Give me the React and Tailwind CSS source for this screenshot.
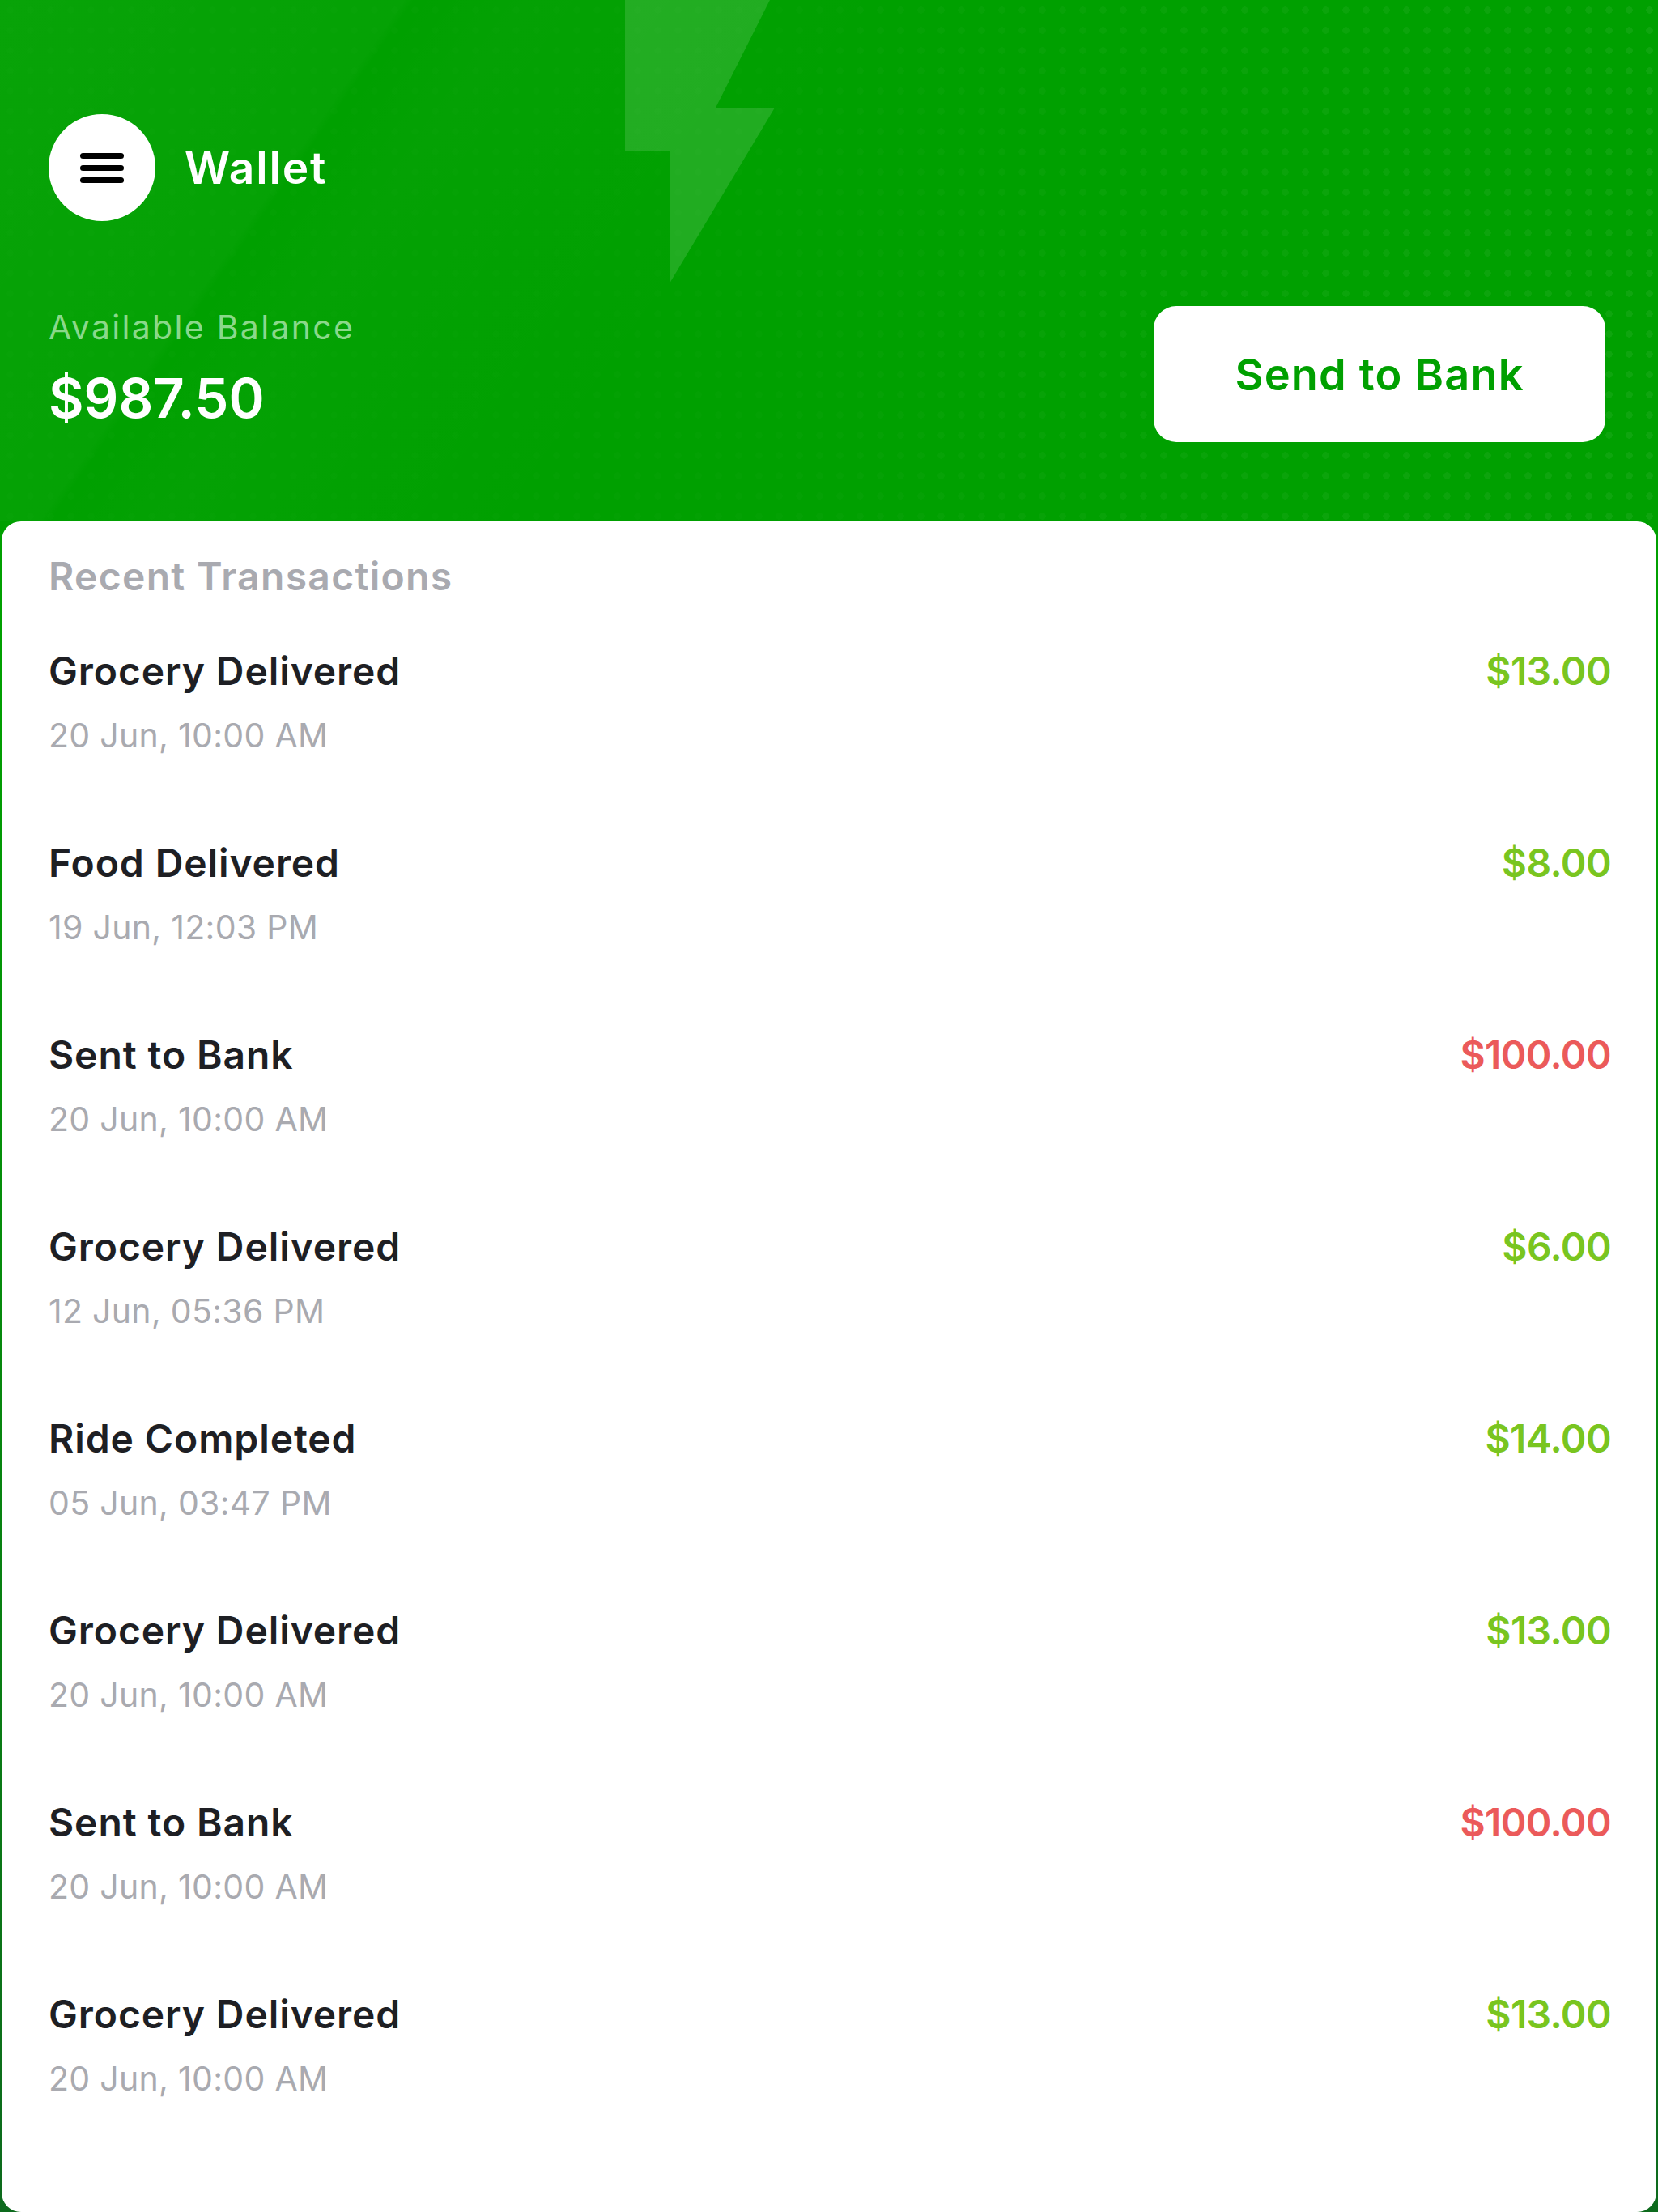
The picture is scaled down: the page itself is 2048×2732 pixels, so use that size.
import React from "react";

const transactions = [
  { title: "Grocery Delivered", date: "20 Jun, 10:00 AM", amount: "$13.00", type: "credit" },
  { title: "Food Delivered", date: "19 Jun, 12:03 PM", amount: "$8.00", type: "credit" },
  { title: "Sent to Bank", date: "20 Jun, 10:00 AM", amount: "$100.00", type: "debit" },
  { title: "Grocery Delivered", date: "12 Jun, 05:36 PM", amount: "$6.00", type: "credit" },
  { title: "Ride Completed", date: "05 Jun, 03:47 PM", amount: "$14.00", type: "credit" },
  { title: "Grocery Delivered", date: "20 Jun, 10:00 AM", amount: "$13.00", type: "credit" },
  { title: "Sent to Bank", date: "20 Jun, 10:00 AM", amount: "$100.00", type: "debit" },
  { title: "Grocery Delivered", date: "20 Jun, 10:00 AM", amount: "$13.00", type: "credit" },
];

function Bolt() {
  return (
    <svg className="absolute left-0 top-0" width="1000" height="360" viewBox="0 0 1000 360">
      <polygon points="772,0 951,0 884,133 957,133 827,350 827,186 772,186" fill="#ffffff" fillOpacity="0.13" />
    </svg>
  );
}

function MenuButton() {
  return (
    <button className="w-[132px] h-[132px] rounded-full bg-white flex flex-col items-center justify-center gap-[8px]">
      <span className="block w-[54px] h-[7px] rounded-full bg-black" />
      <span className="block w-[54px] h-[7px] rounded-full bg-black" />
      <span className="block w-[54px] h-[7px] rounded-full bg-black" />
    </button>
  );
}

export default function App() {
  return (
    <div
      className="w-[2048px] h-[2732px] flex flex-col bg-[linear-gradient(to_bottom,#00a000_0%,#00a000_30%,#0d6a1d_100%)]"
      style={{ fontFamily: "Inter, 'Noto Sans', sans-serif" }}
    >
      {/* header */}
      <div className="relative h-[644px] shrink-0 overflow-hidden bg-[#00a000]">
        <div className="absolute inset-0 bg-[linear-gradient(125deg,rgba(255,255,255,0.03)_0%,rgba(255,255,255,0.02)_20%,rgba(255,255,255,0)_20.5%,rgba(255,255,255,0.015)_26%,rgba(255,255,255,0)_45%)]" />
        <div className="absolute inset-0 bg-[radial-gradient(circle,rgba(255,255,255,0.06)_4px,transparent_4.5px)] bg-[size:25px_25px] [mask-image:linear-gradient(to_right,rgba(0,0,0,0.2)_0%,rgba(0,0,0,0.2)_45%,black_100%)]" />
        <Bolt />

        <div className="relative pt-[141px] pl-[60px] pr-[65px]">
          <div className="flex items-center gap-[36px]">
            <MenuButton />
            <h1 className="text-[55px] leading-[64px] font-semibold tracking-[1.8px] text-white">Wallet</h1>
          </div>

          <div className="mt-[105px] flex items-start justify-between">
            <div className="pt-[2px]">
              <p className="text-[41px] leading-[48px] tracking-[2.3px] text-[#8ad88a]">Available Balance</p>
              <p className="mt-[24px] text-[67px] leading-[80px] font-semibold text-white">$987.50</p>
            </div>
            <button className="w-[558px] h-[168px] rounded-[28px] bg-white text-[54px] font-semibold tracking-[1.2px] text-[#00a000]">
              Send to Bank
            </button>
          </div>
        </div>
      </div>

      {/* transactions card */}
      <div className="mx-[2px] flex-1 bg-white rounded-[24px] pl-[58px] pr-[56px] pt-[38px]">
        <h2 className="text-[48px] leading-[60px] font-semibold tracking-[1.3px] text-[#a9aab0]">Recent Transactions</h2>
        <div className="mt-[57px] flex flex-col gap-[100px]">
          {transactions.map((t, i) => (
            <div key={i} className="flex items-start justify-between">
              <div>
                <p className="text-[48px] leading-[60px] font-semibold tracking-[0.9px] text-[#1e1f24]">{t.title}</p>
                <p className="mt-[21px] text-[41px] leading-[56px] tracking-[0.3px] text-[#a9aab0]">{t.date}</p>
              </div>
              <p
                className={`text-[48px] leading-[60px] font-semibold tracking-[-0.6px] ${
                  t.type === "debit" ? "text-[#eb5a5a]" : "text-[#79c520]"
                }`}
              >
                {t.amount}
              </p>
            </div>
          ))}
        </div>
      </div>
    </div>
  );
}
